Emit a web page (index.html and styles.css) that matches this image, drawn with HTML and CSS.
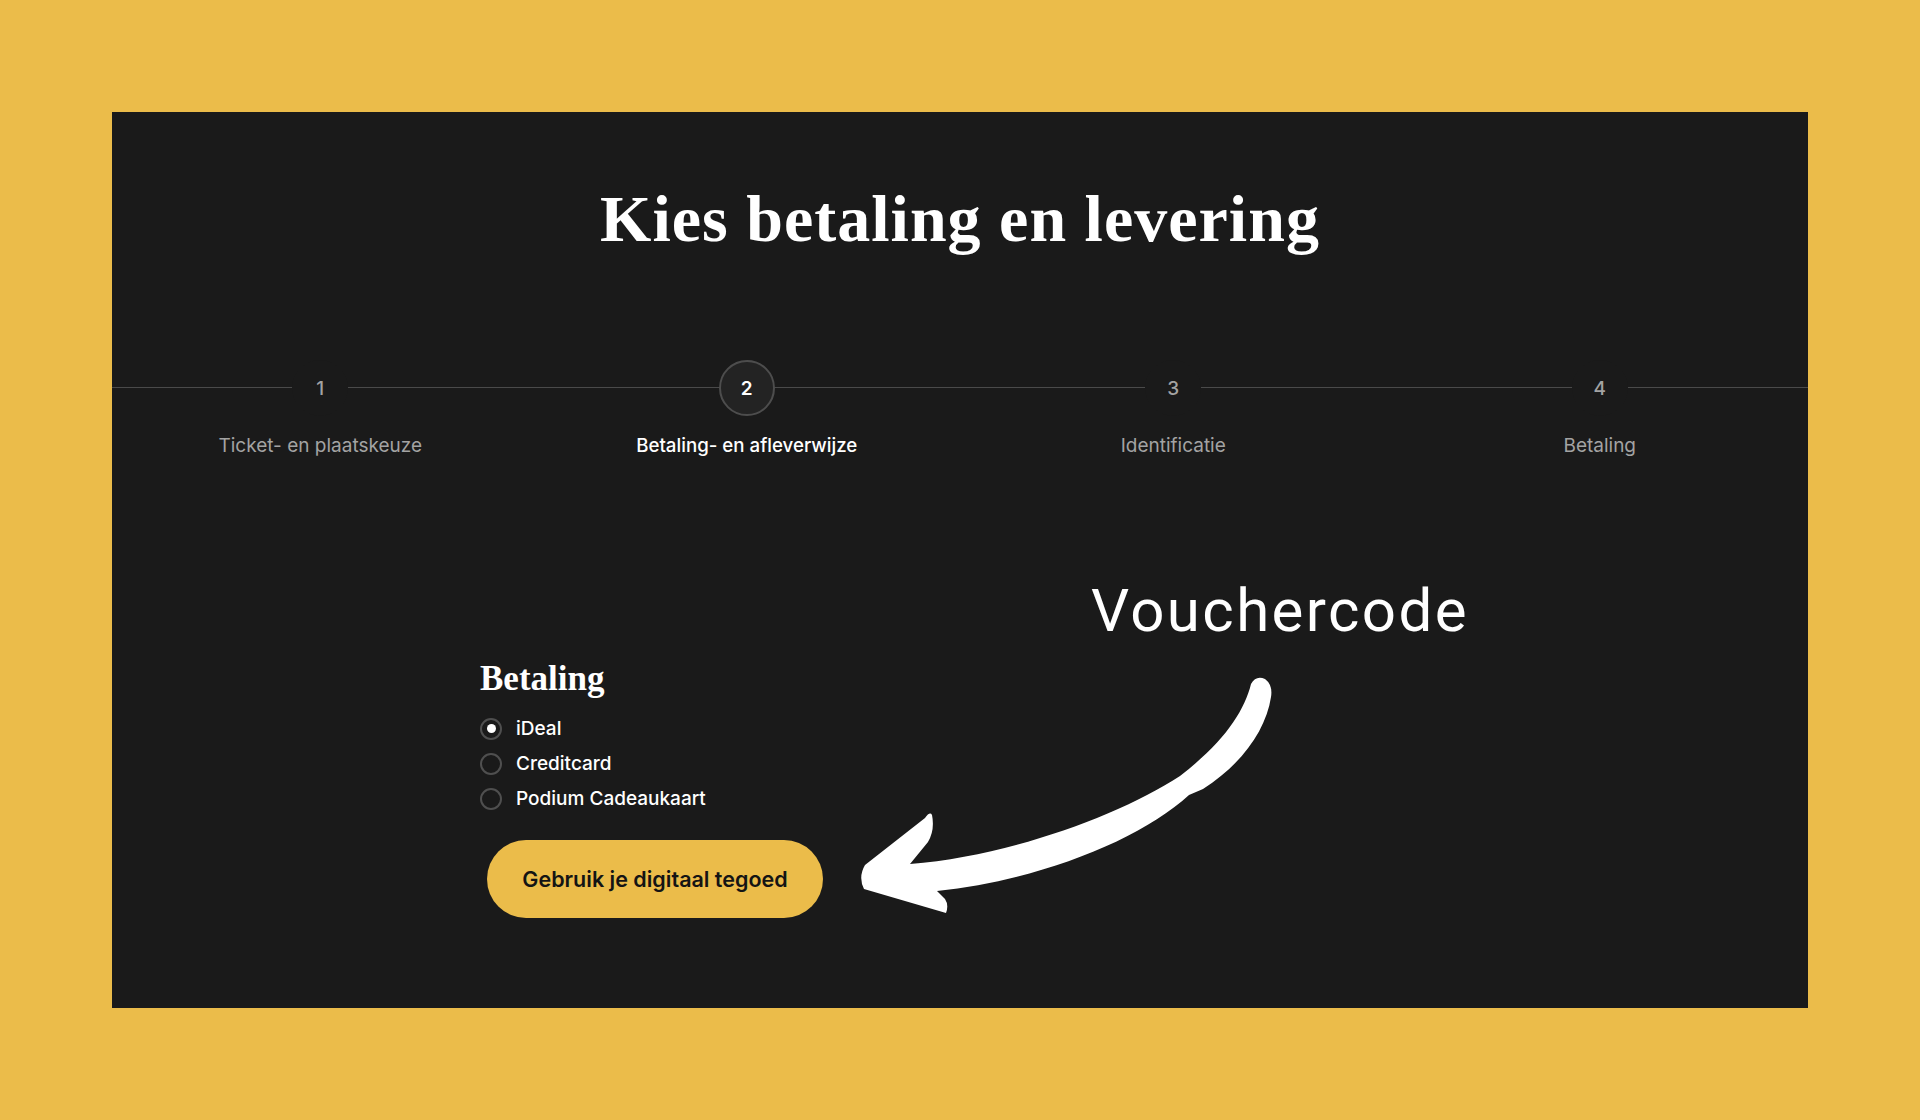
FILE: index.html
```html
<!DOCTYPE html>
<html lang="nl">
<head>
<meta charset="utf-8">
<title>Kies betaling en levering</title>
<link rel="stylesheet" href="styles.css">
</head>
<body>
<main class="panel">
  <h1 class="title">Kies betaling en levering</h1>
  <ol class="stepper">
    <li class="step"><span class="num">1</span><span class="label">Ticket- en plaatskeuze</span></li>
    <li class="step active"><span class="num">2</span><span class="label">Betaling- en afleverwijze</span></li>
    <li class="step"><span class="num">3</span><span class="label">Identificatie</span></li>
    <li class="step"><span class="num">4</span><span class="label">Betaling</span></li>
  </ol>
  <section class="payment">
    <h2 class="section-title">Betaling</h2>
    <ul class="options">
      <li class="option checked"><span class="radio"></span><span class="opt-label">iDeal</span></li>
      <li class="option"><span class="radio"></span><span class="opt-label">Creditcard</span></li>
      <li class="option"><span class="radio"></span><span class="opt-label">Podium Cadeaukaart</span></li>
    </ul>
    <button class="btn" type="button">Gebruik je digitaal tegoed</button>
  </section>
</main>
<div class="annotation">Vouchercode</div>
<svg class="arrow" width="1920" height="1120" viewBox="0 0 1920 1120" aria-hidden="true">
  <path fill="#ffffff" d="M1251,684 Q1256,675 1265,679 Q1273,685 1271,697 C1266,730 1242,764 1203,789 L1189,795 C1140,840 1040,880 937,891 L945,899 Q949,905 946,913 L864,889 Q858,877 865,865 L925,818 Q930,811 932,815 Q935,830 928,842 L910,864 C1010,856 1120,815 1180,776 C1224,742 1244,712 1251,684 Z"/>
</svg>
</body>
</html>
```
FILE: styles.css
```css
* { box-sizing: border-box; }
html, body { margin: 0; padding: 0; }
body {
  background: #ebbc4a;
  padding: 112px;
  height: 1120px;
  position: relative;
  font-family: Inter, "Noto Sans", sans-serif;
}
.panel {
  background: #1a1a1a;
  height: 896px;
  padding-top: 74px;
  overflow: hidden;
}
.title {
  margin: 0;
  text-align: center;
  color: #ffffff;
  font-family: "Liberation Serif", serif;
  font-weight: 700;
  font-size: 66px;
  line-height: 1;
  letter-spacing: 1px;
}
.stepper {
  list-style: none;
  margin: 108px -5px 0;
  padding: 0;
  display: grid;
  grid-template-columns: repeat(4, 1fr);
}
.step {
  display: flex;
  flex-direction: column;
  align-items: center;
  position: relative;
}
.step::before {
  content: "";
  position: absolute;
  left: 0;
  right: 0;
  top: 27px;
  height: 1px;
  background: #4a4a4a;
}
.num {
  position: relative;
  width: 56px;
  height: 56px;
  border-radius: 50%;
  background: #1a1a1a;
  color: #a3a3a3;
  font-size: 19px;
  font-weight: 500;
  display: flex;
  align-items: center;
  justify-content: center;
}
.step.active .num {
  background: #232323;
  border: 2px solid #4d4d4d;
  color: #ffffff;
  font-weight: 600;
}
.label {
  margin-top: 18px;
  font-size: 19px;
  line-height: 24px;
  color: #a3a3a3;
  font-weight: 400;
}
.step.active .label {
  color: #ffffff;
  font-weight: 500;
  font-size: 18.7px;
}
.payment {
  margin-top: 203px;
  padding-left: 368px;
}
.section-title {
  margin: 0;
  color: #ffffff;
  font-family: "Liberation Serif", serif;
  font-weight: 700;
  font-size: 35px;
  line-height: 36px;
}
.options {
  list-style: none;
  margin: 14px 0 0;
  padding: 0;
}
.option {
  height: 35px;
  display: flex;
  align-items: center;
  gap: 14px;
}
.radio {
  width: 22px;
  height: 22px;
  border-radius: 50%;
  border: 2px solid #4f4f4f;
  display: flex;
  align-items: center;
  justify-content: center;
}
.option.checked .radio::after {
  content: "";
  width: 9px;
  height: 9px;
  border-radius: 50%;
  background: #ffffff;
}
.opt-label {
  color: #ffffff;
  font-size: 19px;
  font-weight: 500;
}
.btn {
  margin: 24px 0 0 7px;
  width: 336px;
  height: 78px;
  border: none;
  border-radius: 39px;
  background: #ebbc4a;
  color: #141414;
  font-family: Inter, "Noto Sans", sans-serif;
  font-size: 21.5px;
  font-weight: 600;
  cursor: pointer;
}
.annotation {
  position: absolute;
  left: 1091px;
  top: 581px;
  color: #ffffff;
  font-family: Roboto, "Liberation Sans", sans-serif;
  font-size: 60px;
  line-height: 1;
  letter-spacing: 2.4px;
}
.arrow {
  position: absolute;
  left: 0;
  top: 0;
  pointer-events: none;
}
```
